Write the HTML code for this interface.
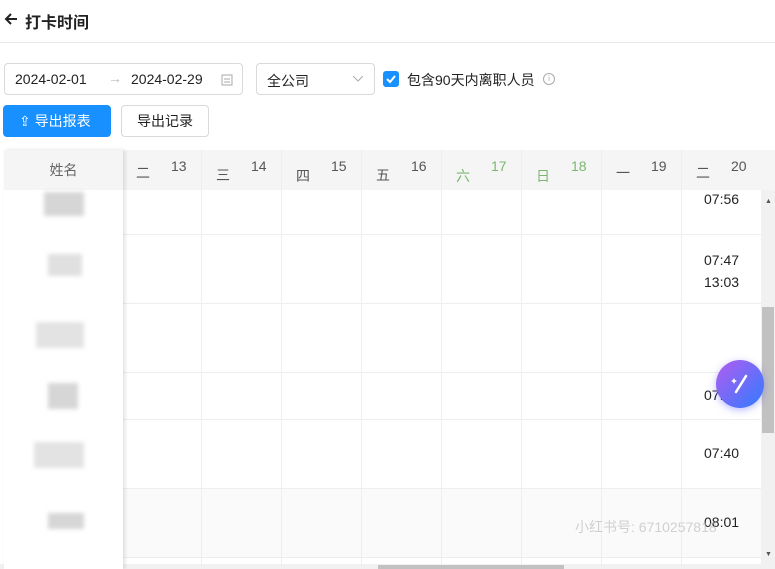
<!DOCTYPE html><html><head><meta charset="utf-8"><style>
*{box-sizing:border-box;margin:0;padding:0}
body{width:775px;height:569px;overflow:hidden;background:#fff;font-family:"Liberation Sans","Noto Sans CJK SC",sans-serif;color:#222;position:relative}
.a{position:absolute}
.hd{top:9px;left:25px;font-size:16px;font-weight:bold;color:#222}
.line{top:42px;left:0;width:775px;height:1px;background:#e8e8e8}
.box{border:1px solid #d9d9d9;border-radius:4px;background:#fff}
.th{top:150px;height:40px;background:#f5f5f5}
.col{border-left:1px solid #eee;}
.hc{font-size:14px;color:#555}
.g{color:#7ab86f}
.t{font-size:14px;color:#222}
.blk{background:#d6d6d6;filter:blur(2px)}
</style></head><body>
<svg class="a" style="left:4px;top:12px" width="14" height="14" viewBox="0 0 14 14"><path d="M13 7H2M7 2L2 7L7 12" fill="none" stroke="#222" stroke-width="2"/></svg>
<div class="a hd">打卡时间</div>
<div class="a line"></div>
<div class="a box" style="left:4px;top:63px;width:239px;height:32px;font-size:14px">
<span class="a" style="left:10px;top:7px">2024-02-01</span><span class="a" style="left:103px;top:6px;color:#bbb">→</span><span class="a" style="left:126px;top:7px">2024-02-29</span>
<svg class="a" style="left:216px;top:9px" width="12" height="13" viewBox="0 0 12 13"><rect x="1" y="2" width="10" height="10" fill="none" stroke="#aaa"/><line x1="3" y1="6" x2="9" y2="6" stroke="#aaa"/><line x1="3" y1="9" x2="9" y2="9" stroke="#aaa"/></svg></div>
<div class="a box" style="left:256px;top:63px;width:119px;height:32px;font-size:14px"><span class="a" style="left:10px;top:7px">全公司</span><svg class="a" style="left:96px;top:12px" width="10" height="6"><path d="M0 0L5 5L10 0" fill="none" stroke="#aaa"/></svg></div>
<div class="a" style="left:383px;top:71px;width:16px;height:16px;border-radius:3px;background:#1890ff"><svg width="16" height="16"><path d="M4 8L7 11L12 5" fill="none" stroke="#fff" stroke-width="2"/></svg></div>
<div class="a" style="left:407px;top:70px;font-size:14px">包含90天内离职人员</div>
<div class="a" style="left:543px;top:73px;width:12px;height:12px;border:1px solid #aaa;border-radius:50%;font-size:8px;color:#aaa;text-align:center;line-height:10px">i</div>
<div class="a" style="left:3px;top:105px;width:108px;height:32px;background:#1890ff;border-radius:4px;color:#fff;font-size:14px;line-height:32px;padding-left:16px">⇪ 导出报表</div>
<div class="a box" style="left:121px;top:105px;width:88px;height:32px;font-size:14px;line-height:30px;text-align:center">导出记录</div>
<div class="a th" style="left:4px;width:771px"></div>
<div class="a" style="left:4px;top:150px;width:119px;height:419px;background:#fff;box-shadow:2px 0 4px rgba(0,0,0,.12);z-index:2">
<div style="height:40px;background:#f5f5f5;text-align:center;line-height:40px;font-size:14px;color:#666">姓名</div>
<div class="a blk" style="left:40px;top:42px;width:40px;height:24px"></div>
<div class="a blk" style="left:44px;top:104px;width:34px;height:22px;background:#e0e0e0"></div>
<div class="a blk" style="left:32px;top:172px;width:48px;height:26px;background:#e3e3e3"></div>
<div class="a blk" style="left:44px;top:233px;width:30px;height:26px"></div>
<div class="a blk" style="left:30px;top:292px;width:50px;height:26px;background:#e3e3e3"></div>
<div class="a blk" style="left:44px;top:363px;width:36px;height:16px"></div>
</div>
<div class="a" style="left:123px;top:488px;width:638px;height:69px;background:#fafafa"></div>
<div class="a" style="left:123px;top:150px;width:638px;height:419px">
<div class="a col" style="left:78px;top:0;height:419px"></div><div class="a col" style="left:158px;top:0;height:419px"></div><div class="a col" style="left:238px;top:0;height:419px"></div><div class="a col" style="left:318px;top:0;height:419px"></div><div class="a col" style="left:398px;top:0;height:419px"></div><div class="a col" style="left:478px;top:0;height:419px"></div><div class="a col" style="left:558px;top:0;height:419px"></div>
<div class="a" style="left:0;top:84px;width:638px;height:1px;background:#eee"></div><div class="a" style="left:0;top:153px;width:638px;height:1px;background:#eee"></div><div class="a" style="left:0;top:222px;width:638px;height:1px;background:#eee"></div><div class="a" style="left:0;top:269px;width:638px;height:1px;background:#eee"></div><div class="a" style="left:0;top:338px;width:638px;height:1px;background:#eee"></div><div class="a" style="left:0;top:407px;width:638px;height:1px;background:#eee"></div>
</div>
<div class="a hc" style="left:136px;top:163px">二</div><div class="a hc" style="left:171px;top:158px">13</div>
<div class="a hc" style="left:216px;top:165px">三</div><div class="a hc" style="left:251px;top:158px">14</div>
<div class="a hc" style="left:296px;top:166px">四</div><div class="a hc" style="left:331px;top:158px">15</div>
<div class="a hc" style="left:376px;top:165px">五</div><div class="a hc" style="left:411px;top:158px">16</div>
<div class="a hc g" style="left:456px;top:166px">六</div><div class="a hc g" style="left:491px;top:158px">17</div>
<div class="a hc g" style="left:536px;top:166px">日</div><div class="a hc g" style="left:571px;top:158px">18</div>
<div class="a hc" style="left:616px;top:163px">一</div><div class="a hc" style="left:651px;top:158px">19</div>
<div class="a hc" style="left:696px;top:163px">二</div><div class="a hc" style="left:731px;top:158px">20</div>
<div class="a t" style="left:704px;top:191px">07:56</div>
<div class="a t" style="left:704px;top:249px;line-height:22px">07:47<br>13:03</div>
<div class="a t" style="left:704px;top:387px">07:</div>
<div class="a t" style="left:704px;top:445px">07:40</div>
<div class="a t" style="left:704px;top:514px">08:01</div>
<div class="a" style="left:575px;top:517px;font-size:14px;color:rgba(180,180,180,.6)">小红书号: 6710257818</div>
<div class="a" style="left:761px;top:190px;width:14px;height:379px;background:#f1f1f1"></div>
<div class="a" style="left:762px;top:307px;width:12px;height:126px;background:#c1c1c1"></div>
<div class="a" style="left:765px;top:198px;font-size:7px;color:#555">▲</div>
<div class="a" style="left:765px;top:551px;font-size:7px;color:#555">▼</div>
<div class="a" style="left:0;top:564px;width:761px;height:5px;background:#f1f1f1"></div>
<div class="a" style="left:378px;top:565px;width:186px;height:4px;background:#c1c1c1"></div>
<div class="a" style="left:716px;top:360px;width:48px;height:48px;border-radius:50%;background:linear-gradient(135deg,#b35cf0,#2f7cff);box-shadow:0 2px 8px rgba(80,80,255,.4);z-index:5"><svg width="48" height="48"><line x1="20" y1="32" x2="30" y2="16" stroke="#fff" stroke-width="2.5" stroke-linecap="round"/><path d="M18 18l1 2l2 1l-2 1l-1 2l-1-2l-2-1l2-1z" fill="#fff"/></svg></div>
</body></html>
